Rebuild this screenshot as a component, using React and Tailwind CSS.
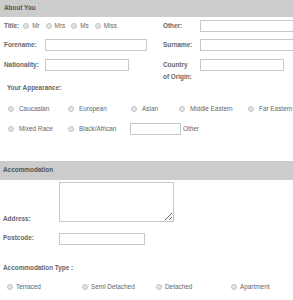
import React from 'react';

const Radio = () => (
  <span className="inline-block w-[6px] h-[6px] rounded-full border border-[#c4c4c4] bg-[#e4e4e4] shrink-0" />
);

const Choice = ({ label, width, gap = 'gap-[5px]' }) => (
  <div className={`flex items-center ${gap} shrink-0`} style={{ width }}>
    <Radio />
    <span className="whitespace-nowrap">{label}</span>
  </div>
);

const Field = ({ className }) => (
  <div className={`h-[12px] border border-[#c8c8c8] bg-white shrink-0 ${className}`} />
);

export default function App() {
  return (
    <div className="w-[293px] h-[300px] overflow-hidden bg-white font-['Liberation_Sans',Arial,sans-serif] text-[6.4px] leading-none text-[#666]">
      <div className="h-[17px] bg-[#cccccc] flex items-center pl-[4px] font-bold text-[#555]">About You</div>

      {/* title / other */}
      <div className="flex items-center h-[12px] mt-[3px] pl-[4px]">
        <div className="flex items-center w-[159px] shrink-0 gap-[3px]">
          <span className="font-bold mr-[1px]">Title:</span>
          <Radio /><span className="mr-[3px]">Mr</span>
          <Radio /><span className="mr-[3px]">Mrs</span>
          <Radio /><span className="mr-[3px]">Ms</span>
          <Radio /><span>Miss</span>
        </div>
        <span className="font-bold w-[37px] shrink-0">Other:</span>
        <Field className="w-[110px]" />
      </div>

      {/* names */}
      <div className="flex items-center h-[12px] mt-[7px] pl-[4px]">
        <span className="font-bold w-[41px] shrink-0">Forename:</span>
        <Field className="w-[102px]" />
        <span className="font-bold w-[37px] ml-[16px] shrink-0">Surname:</span>
        <Field className="w-[110px]" />
      </div>

      <div className="flex items-start mt-[8px] pl-[4px]">
        <span className="font-bold w-[41px] shrink-0 leading-[12px]">Nationality:</span>
        <Field className="w-[84px]" />
        <span className="font-bold w-[37px] ml-[34px] shrink-0 leading-[12px]">Country<br />of Origin:</span>
        <Field className="w-[84px]" />
      </div>

      <div className="font-bold pl-[7px] -mt-px h-[12px] flex items-center">Your Appearance:</div>

      <div className="flex items-center h-[12px] mt-[9px] pl-[8px]">
        <Choice label="Caucasian" width="60px" />
        <Choice label="European" width="63px" />
        <Choice label="Asian" width="48px" />
        <Choice label="Middle Eastern" width="69px" />
        <Choice label="Far Eastern" width="50px" />
      </div>

      <div className="flex items-center h-[12px] mt-[8px] pl-[8px]">
        <Choice label="Mixed Race" width="60px" />
        <Choice label="Black/African" width="62px" />
        <Field className="w-[51px] h-[11px]" />
        <span className="ml-[2px]">Other</span>
      </div>

      <div className="h-[19px] mt-[26px] bg-[#cccccc] flex items-center pl-[3px] font-bold text-[#555]">Accommodation</div>

      <div className="flex items-end mt-[2px] pl-[3px]">
        <span className="font-bold w-[56px] shrink-0">Address:</span>
        <textarea className="w-[115px] h-[40px] border border-[#c8c8c8] bg-white block" />
      </div>

      <div className="flex items-center h-[11px] mt-[11px] pl-[3px]">
        <span className="font-bold w-[56px] shrink-0">Postcode:</span>
        <Field className="w-[86px] h-[11px]" />
      </div>

      <div className="font-bold pl-[3px] mt-[18px] h-[12px] flex items-center">Accommodation Type :</div>

      <div className="flex items-center h-[12px] mt-[7px] pl-[7px]">
        <Choice label="Terraced" width="75px" gap="gap-[3px]" />
        <Choice label="Semi Detached" width="74px" gap="gap-[3px]" />
        <Choice label="Detached" width="75px" gap="gap-[3px]" />
        <Choice label="Apartment" width="60px" gap="gap-[3px]" />
      </div>
    </div>
  );
}
